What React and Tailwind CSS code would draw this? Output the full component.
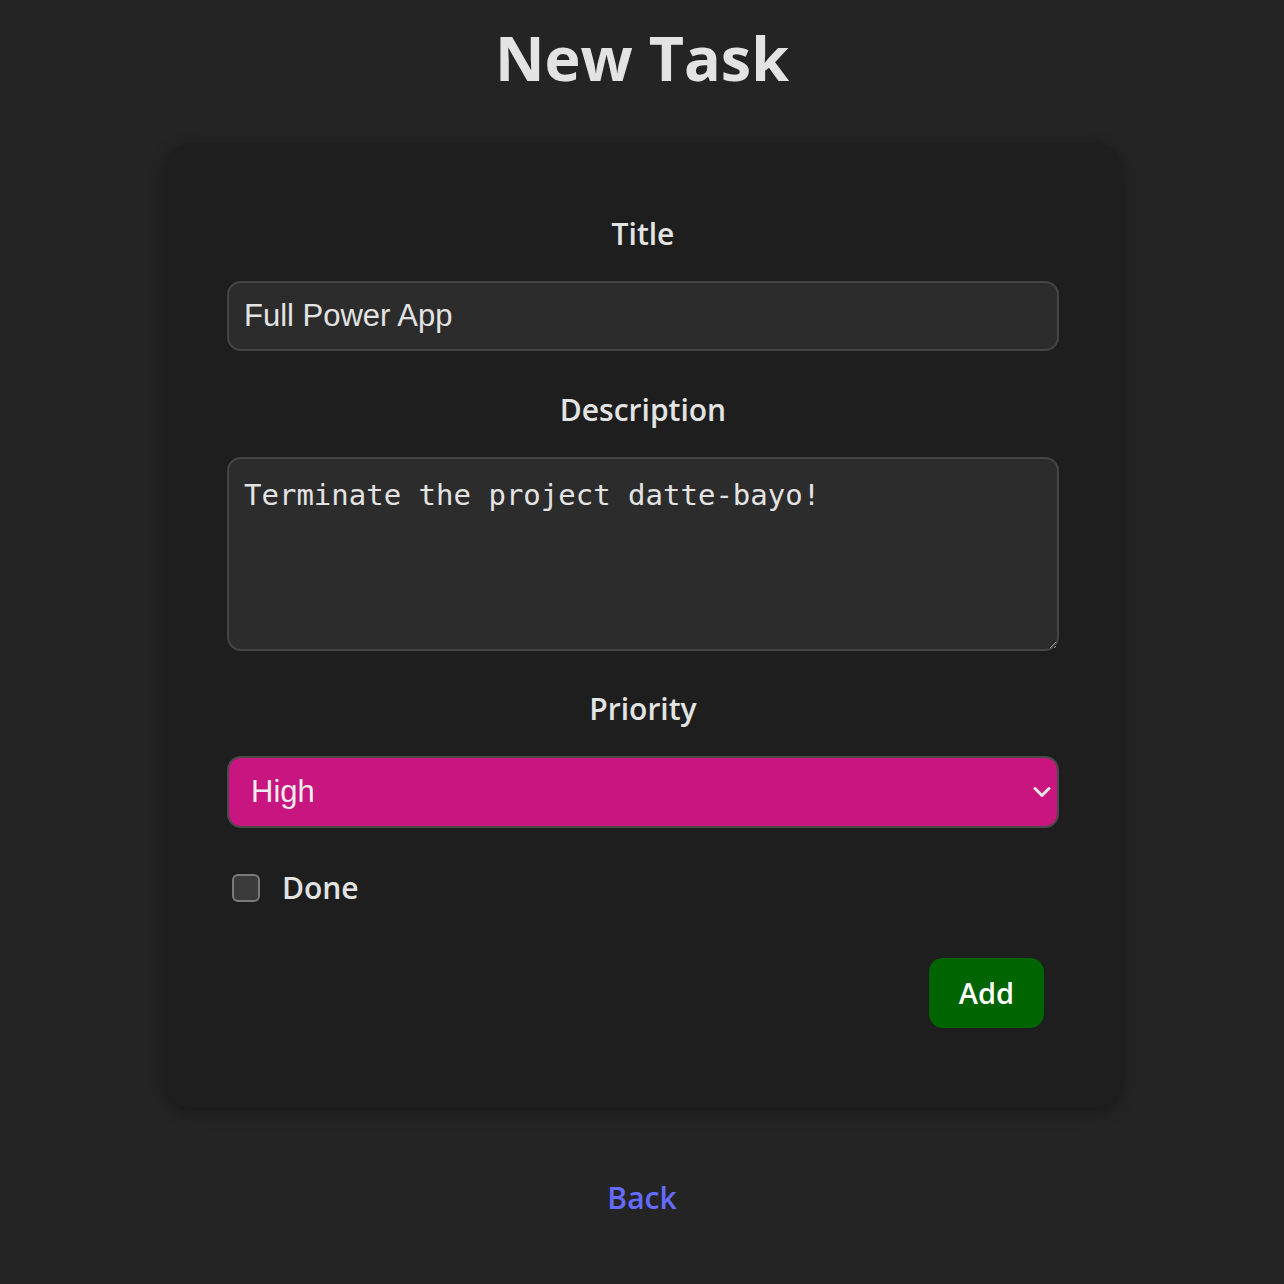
import { useState } from "react";

function App() {
  const [title, setTitle] = useState("Full Power App");
  const [description, setDescription] = useState("Terminate the project datte-bayo!");
  const [priority, setPriority] = useState("High");
  const [done, setDone] = useState(false);

  return (
    <div className="min-h-screen bg-[#242424] text-[#e3e3e3] flex flex-col items-center font-['Open_Sans',sans-serif]">
      <h1 className="text-[61px] font-bold leading-[1.1] mt-[24px] text-[#e3e3e3]">New Task</h1>

      <form
        onSubmit={(e) => e.preventDefault()}
        className="mt-[52px] ml-[2px] w-[958px] bg-[#1e1e1e] rounded-[28px] shadow-[0_4px_16px_rgba(0,0,0,0.35)] px-[63px] pt-[67px] pb-[80px] flex flex-col"
      >
        <label className="text-[30px] font-semibold text-center leading-[48px]">Title</label>
        <input
          type="text"
          value={title}
          onChange={(e) => setTitle(e.target.value)}
          className="mt-[23px] h-[70px] w-full rounded-[14px] border-2 border-[#454545] bg-[#2c2c2c] px-[15px] text-[31px] text-[#e3e3e3] font-['Liberation_Sans',sans-serif] focus:outline-none"
        />

        <label className="mt-[35px] text-[30px] font-semibold text-center leading-[48px]">Description</label>
        <textarea
          value={description}
          onChange={(e) => setDescription(e.target.value)}
          className="mt-[23px] h-[194px] w-full rounded-[14px] border-2 border-[#454545] bg-[#2c2c2c] px-[15px] pt-[18px] pb-[16px] text-[29px] leading-[36px] text-[#e3e3e3] font-['DejaVu_Sans_Mono',monospace] focus:outline-none"
        />

        <label className="mt-[34px] text-[30px] font-semibold text-center leading-[48px]">Priority</label>
        <div className="relative mt-[23px]">
          <select
            value={priority}
            onChange={(e) => setPriority(e.target.value)}
            className="appearance-none h-[72px] w-full rounded-[14px] border-2 border-[#4a4a4a] bg-[#c8157f] px-[22px] text-[31px] text-[#ececec] font-['Liberation_Sans',sans-serif] focus:outline-none"
          >
            <option>Low</option>
            <option>Medium</option>
            <option>High</option>
          </select>
          <svg
            className="absolute right-[8px] top-[30px] pointer-events-none"
            width="18"
            height="12"
            viewBox="0 0 18 12"
            fill="none"
          >
            <path d="M2 2.5 L9 9.5 L16 2.5" stroke="#e6e6e6" strokeWidth="3" strokeLinecap="round" strokeLinejoin="round" />
          </svg>
        </div>

        <label className="mt-[36px] flex items-center gap-[22px] ml-[5px] cursor-pointer">
          <input
            type="checkbox"
            checked={done}
            onChange={(e) => setDone(e.target.checked)}
            className="appearance-none w-[28px] h-[28px] rounded-[6px] border-2 border-[#7a7a7a] bg-[#3b3b3b] checked:bg-[#646cff]"
          />
          <span className="text-[30px] font-semibold leading-[48px]">Done</span>
        </label>

        <div className="flex justify-end mt-[46px] pr-[15px]">
          <button
            type="submit"
            className="h-[70px] px-[30px] rounded-[14px] bg-[#006400] text-white text-[29px] font-semibold"
          >
            Add
          </button>
        </div>
      </form>

      <a className="mt-[66px] text-[30px] font-semibold text-[#646cff] cursor-pointer hover:text-[#535bf2] leading-[48px]">
        Back
      </a>
    </div>
  );
}

export default App;
